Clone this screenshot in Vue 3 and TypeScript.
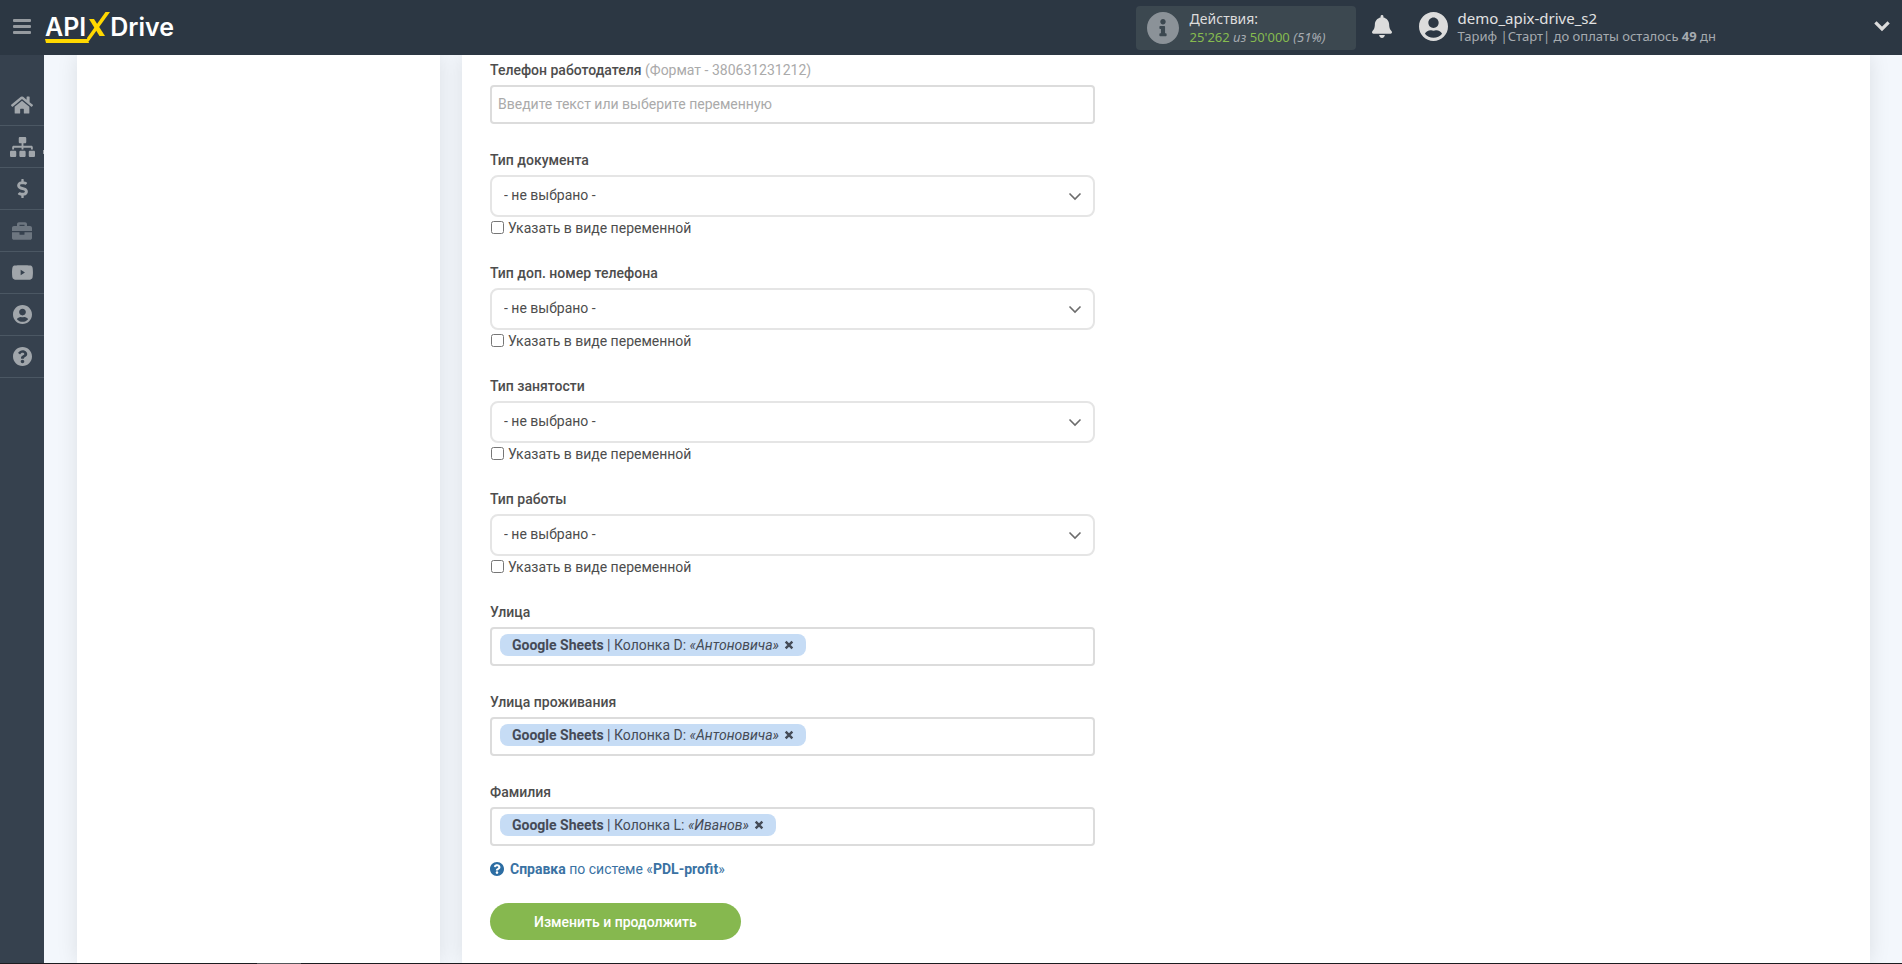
<script setup lang="ts">
import { ref } from 'vue'

interface NavItem {
  name: string
  box: string
  width: number
  height: number
  path: string
  dim?: boolean
  open?: boolean
}

interface Tag {
  column: string
  value: string
}

interface Field {
  id: string
  label: string
  hint?: string
  kind: 'text' | 'select' | 'tags'
  tags?: Tag[]
}

const question =
  'M504 256c0 137-111 248-248 248S8 393 8 256C8 119.100 119 8 256 8s248 111.100 248 248zM262.700 90c-54.500 0-89.300 23-116.500 63.800-3.500 5.300-2.400 12.400 2.700 16.300l34.700 26.300c5.200 3.900 12.600 3 16.700-2.100 17.900-22.700 30.100-35.800 57.300-35.800 20.400 0 45.700 13.100 45.700 33 0 15-12.400 22.700-32.500 34C247.100 238.500 216 254.900 216 296v4c0 6.600 5.400 12 12 12h56c6.600 0 12-5.400 12-12v-1.300c0-28.500 83.200-29.600 83.200-106.700 0-58-60.200-102-116.500-102zM256 338c-25.400 0-46 20.600-46 46s20.600 46 46 46 46-20.600 46-46-20.600-46-46-46z'
const userCircle =
  'M248 8C111 8 0 119 0 256s111 248 248 248 248-111 248-248S385 8 248 8zm0 96c48.600 0 88 39.400 88 88s-39.400 88-88 88-88-39.400-88-88 39.400-88 88-88zm0 344c-58.700 0-111.300-26.600-146.500-68.200 18.800-35.400 55.600-59.800 98.500-59.800 2.400 0 4.800.4 7.100 1.100 13 4.200 26.600 6.900 40.900 6.900 14.300 0 28-2.700 40.900-6.900 2.300-.7 4.700-1.100 7.100-1.100 42.900 0 79.700 24.400 98.500 59.800C359.300 421.400 306.700 448 248 448z'

const nav: NavItem[] = [
  {
    name: 'Главная', box: '0 0 576 512', width: 22, height: 20,
    path: 'M280.400 148.300L96 300.100V464a16 16 0 0 0 16 16l112.100-.3a16 16 0 0 0 15.900-16V368a16 16 0 0 1 16-16h64a16 16 0 0 1 16 16v95.600a16 16 0 0 0 16 16.100l112 .3a16 16 0 0 0 16-16V300L295.700 148.300a12.200 12.200 0 0 0-15.300 0zM571.600 251.500L488 182.600V44.100a12 12 0 0 0-12-12h-56a12 12 0 0 0-12 12v72.600L318.500 43a48 48 0 0 0-61 0L4.300 251.500a12 12 0 0 0-1.600 16.900l25.500 31a12 12 0 0 0 16.900 1.600l235.200-193.700a12.200 12.200 0 0 1 15.300 0L530.900 301a12 12 0 0 0 16.900-1.600l25.500-31a12 12 0 0 0-1.700-16.900z',
  },
  {
    name: 'Связи', box: '0 0 640 512', width: 25, height: 20, open: true,
    path: 'M128 352H32c-17.700 0-32 14.300-32 32v96c0 17.700 14.300 32 32 32h96c17.700 0 32-14.300 32-32v-96c0-17.700-14.300-32-32-32zm-24-80h192v48h48v-48h192v48h48v-57.600c0-21.200-17.200-38.400-38.400-38.400H344v-64h40c17.700 0 32-14.300 32-32V32c0-17.700-14.300-32-32-32H256c-17.700 0-32 14.300-32 32v96c0 17.700 14.300 32 32 32h40v64H94.400C73.200 224 56 241.200 56 262.400V320h48v-48zm264 80h-96c-17.700 0-32 14.300-32 32v96c0 17.700 14.300 32 32 32h96c17.700 0 32-14.300 32-32v-96c0-17.700-14.300-32-32-32zm240 0h-96c-17.700 0-32 14.300-32 32v96c0 17.700 14.300 32 32 32h96c17.700 0 32-14.300 32-32v-96c0-17.700-14.300-32-32-32z',
  },
  {
    name: 'Оплата', box: '0 0 288 512', width: 11, height: 19,
    path: 'M209.200 233.400l-108-31.600C88.700 198.200 80 186.500 80 173.500c0-16.300 13.200-29.500 29.500-29.500h66.300c12.200 0 24.200 3.700 34.200 10.500 6.100 4.100 14.300 3.100 19.500-2l34.800-34c7.100-6.900 6.100-18.400-1.800-24.500C238 74.800 207.400 64.100 176 64V16c0-8.800-7.200-16-16-16h-32c-8.800 0-16 7.200-16 16v48h-2.500C45.800 64-5.400 118.700.5 183.600c4.200 46.100 39.400 83.600 83.800 96.600l102.500 30c12.500 3.700 21.200 15.300 21.200 28.300 0 16.300-13.200 29.500-29.500 29.500h-66.300C100 368 88 364.300 78 357.500c-6.100-4.100-14.300-3.100-19.500 2l-34.800 34c-7.100 6.900-6.100 18.400 1.800 24.500 24.500 19.200 55.100 29.900 86.500 30v48c0 8.800 7.200 16 16 16h32c8.800 0 16-7.200 16-16v-48.200c46.600-.9 90.300-28.600 105.700-72.700 21.500-61.600-14.600-124.800-72.500-141.700z',
  },
  {
    name: 'Проекты', box: '0 0 512 512', width: 20, height: 20, dim: true,
    path: 'M320 336c0 8.800-7.200 16-16 16h-96c-8.800 0-16-7.200-16-16v-48H0v144c0 25.600 22.400 48 48 48h416c25.600 0 48-22.400 48-48V288H320v48zm144-208h-80V80c0-25.600-22.400-48-48-48H176c-25.600 0-48 22.400-48 48v48H48c-25.600 0-48 22.400-48 48v80h512v-80c0-25.600-22.400-48-48-48zm-144 0H192V96h128v32z',
  },
  {
    name: 'Видео', box: '14 64 548 384', width: 21, height: 15,
    path: 'M549.700 124.100c-6.300-23.700-24.800-42.300-48.300-48.600C458.800 64 288 64 288 64S117.200 64 74.600 75.500c-23.500 6.300-42 24.900-48.300 48.600-11.400 42.900-11.400 132.300-11.400 132.300s0 89.400 11.400 132.300c6.300 23.700 24.800 41.500 48.300 47.800C117.200 448 288 448 288 448s170.800 0 213.400-11.500c23.500-6.300 42-24.200 48.300-47.800 11.400-42.900 11.400-132.300 11.400-132.300s0-89.400-11.400-132.300zM240 326V187l112 69z',
  },
  { name: 'Профиль', box: '0 8 496 496', width: 19, height: 19, path: userCircle },
  { name: 'Помощь', box: '8 8 496 496', width: 19, height: 19, path: question },
]

const fields: Field[] = [
  { id: 'employer-phone', label: 'Телефон работодателя', hint: '(Формат - 380631231212)', kind: 'text' },
  { id: 'doc-type', label: 'Тип документа', kind: 'select' },
  { id: 'extra-phone-type', label: 'Тип доп. номер телефона', kind: 'select' },
  { id: 'employment-type', label: 'Тип занятости', kind: 'select' },
  { id: 'work-type', label: 'Тип работы', kind: 'select' },
  { id: 'street', label: 'Улица', kind: 'tags', tags: [{ column: 'Колонка D:', value: '«Антоновича»' }] },
  { id: 'living-street', label: 'Улица проживания', kind: 'tags', tags: [{ column: 'Колонка D:', value: '«Антоновича»' }] },
  { id: 'surname', label: 'Фамилия', kind: 'tags', tags: [{ column: 'Колонка L:', value: '«Иванов»' }] },
]

const tags = ref<Record<string, Tag[]>>(
  Object.fromEntries(fields.map((f) => [f.id, f.tags ?? []])),
)

function removeTag(id: string, index: number) {
  tags.value[id].splice(index, 1)
}
</script>

<template>
  <div class="page">
    <header class="topbar">
      <button class="burger" type="button" aria-label="Меню"><i></i><i></i><i></i></button>
      <a class="logo" href="#" aria-label="APIXDrive">
        <span class="logo-api">API</span>
        <svg class="logo-x" viewBox="0 0 24 32" width="24" height="32" aria-hidden="true">
          <path d="M3 8h5l11 17h-5.500z" fill="#ffd800" />
          <path d="M19.500 1H24L3 30H1.500L1 27z" fill="#ffd800" />
        </svg>
        <span class="logo-drive">Drive</span>
        <svg class="logo-line" viewBox="0 0 44 4" width="44" height="4" aria-hidden="true">
          <path d="M0 0h43l1 4H1z" fill="#ffd800" />
        </svg>
      </a>

      <div class="usage">
        <svg class="usage-icon" viewBox="8 8 496 496" width="32" height="32" aria-hidden="true">
          <path d="M256 8C119 8 8 119.100 8 256c0 137 111 248 248 248s248-111 248-248C504 119.100 393 8 256 8zm0 110c23.200 0 42 18.800 42 42s-18.800 42-42 42-42-18.800-42-42 18.800-42 42-42zm56 254c0 6.600-5.400 12-12 12h-88c-6.600 0-12-5.400-12-12v-24c0-6.600 5.400-12 12-12h12v-64h-12c-6.600 0-12-5.400-12-12v-24c0-6.600 5.400-12 12-12h64c6.600 0 12 5.400 12 12v100h12c6.600 0 12 5.400 12 12z" />
        </svg>
        <div>
          <div class="usage-title">Действия:</div>
          <div class="usage-count"><b>25'262</b> <em>из</em> <b>50'000</b> <em>(51%)</em></div>
        </div>
      </div>

      <button class="bell" type="button" aria-label="Уведомления">
        <svg viewBox="0 0 448 512" width="20" height="23" aria-hidden="true">
          <path d="M224 512c35.300 0 64-28.700 64-64H160c0 35.300 28.600 64 64 64zm215.400-149.700c-19.300-20.800-55.500-52-55.500-154.300 0-77.700-54.500-139.900-127.900-155.200V32c0-17.700-14.300-32-32-32s-32 14.300-32 32v20.800C118.600 68.100 64.100 130.300 64.100 208c0 102.300-36.200 133.500-55.500 154.300-6 6.400-8.700 14.100-8.600 21.700.1 16.400 13 32 32.100 32h383.800c19.100 0 32-15.600 32.100-32 0-7.600-2.700-15.300-8.600-21.700z" />
        </svg>
      </button>

      <div class="account">
        <svg viewBox="0 8 496 496" width="29" height="29" aria-hidden="true"><path :d="userCircle" /></svg>
        <div>
          <div class="account-name">demo_apix-drive_s2</div>
          <div class="account-plan">Тариф |Старт| до оплаты осталось <b>49</b> дн</div>
        </div>
      </div>

      <button class="more" type="button" aria-label="Открыть меню аккаунта">
        <svg viewBox="0 0 16 11" width="16" height="11" aria-hidden="true">
          <path d="M2.500 2.500L8 8l5.500-5.500" fill="none" stroke="#dcdcdc" stroke-width="3.200" stroke-linecap="square" />
        </svg>
      </button>
    </header>

    <div class="body">
      <nav class="rail">
        <a v-for="item in nav" :key="item.name" class="rail-item" :class="{ dim: item.dim, open: item.open }" href="#" :aria-label="item.name">
          <svg :viewBox="item.box" :width="item.width" :height="item.height" aria-hidden="true"><path :d="item.path" /></svg>
        </a>
      </nav>

      <div class="content">
        <aside class="panel"></aside>
        <main class="panel main">
          <form class="form" @submit.prevent>
            <div v-for="field in fields" :key="field.id" class="field">
              <label class="label" :for="field.id">{{ field.label }} <span v-if="field.hint">{{ field.hint }}</span></label>

              <input v-if="field.kind === 'text'" :id="field.id" class="box text" type="text" placeholder="Введите текст или выберите переменную" />

              <template v-else-if="field.kind === 'select'">
                <div class="select-wrap">
                  <select :id="field.id" class="select">
                    <option>- не выбрано -</option>
                  </select>
                  <svg class="chevron" viewBox="0 0 14 9" width="14" height="9" aria-hidden="true">
                    <path d="M1.500 1.500L7 7l5.500-5.500" fill="none" stroke="#6c6c6c" stroke-width="1.600" />
                  </svg>
                </div>
                <label class="check"><input type="checkbox" />Указать в виде переменной</label>
              </template>

              <div v-else class="box tags">
                <span v-for="(tag, i) in tags[field.id]" :key="i" class="tag">
                  <span><b>Google Sheets</b> | {{ tag.column }} <em>{{ tag.value }}</em></span>
                  <button type="button" aria-label="Удалить" @click="removeTag(field.id, i)">
                    <svg viewBox="0 0 9 9" width="10" height="10" aria-hidden="true">
                      <path d="M1.500 1.500l6 6m0-6l-6 6" stroke="#454b57" stroke-width="2.200" fill="none" />
                    </svg>
                  </button>
                </span>
                <input :id="field.id" type="text" />
              </div>
            </div>

            <a class="help" href="#">
              <svg viewBox="8 8 496 496" width="14" height="14" aria-hidden="true"><path :d="question" /></svg>
              <span><b>Справка</b> по системе «<b>PDL-profit</b>»</span>
            </a>
            <button class="submit" type="submit">Изменить и продолжить</button>
          </form>
        </main>
      </div>
    </div>
    <div class="edge"><i></i></div>
  </div>
</template>

<style>
html,
body {
  background: #f3f7fc;
}
</style>

<style scoped>
* {
  box-sizing: border-box;
}
button {
  padding: 0;
  border: 0;
  background: none;
  font: inherit;
  cursor: pointer;
}
svg {
  display: block;
  flex: none;
}
.page {
  display: flex;
  flex-direction: column;
  min-height: 100vh;
  font: 14px/18px Roboto, sans-serif;
  color: #4d4d4d;
}

.topbar {
  position: relative;
  z-index: 1;
  display: flex;
  align-items: center;
  height: 55px;
  padding: 0 12px 2px 13px;
  background: #2c3743;
  font-family: "Noto Sans", sans-serif;
}
.burger {
  display: grid;
  gap: 3px;
  width: 18px;
}
.burger i {
  height: 3px;
  background: #969ba0;
  border-radius: 1px;
}
.logo {
  position: relative;
  display: flex;
  align-items: center;
  height: 32px;
  margin-left: 14px;
  margin-right: auto;
  color: #fff;
  font: 600 25px/32px Inter, sans-serif;
  text-decoration: none;
}
.logo-line {
  position: absolute;
  left: 0;
  bottom: 0;
}
.usage {
  display: flex;
  align-items: center;
  gap: 11px;
  width: 220px;
  height: 44px;
  margin-top: 2px;
  padding-left: 11px;
  background: #3c4850;
  border-radius: 4px;
}
.usage-icon {
  fill: #8b9298;
}
.usage-title {
  font-size: 14px;
  line-height: 18px;
  color: #dcdcdc;
}
.usage-count {
  font-size: 13px;
  line-height: 18px;
  color: #a6abb0;
}
.usage-count b {
  font-weight: 400;
  color: #86bb4f;
}
.bell {
  margin-left: 16px;
}
.bell svg,
.account svg {
  fill: #dcdcdc;
}
.account {
  display: flex;
  align-items: center;
  gap: 10px;
  margin-left: 27px;
}
.account-name {
  font-size: 15px;
  line-height: 18px;
  color: #e2e2e2;
}
.account-plan {
  font-size: 13px;
  line-height: 18px;
  color: #a6abb0;
}
.more {
  margin-left: 158px;
}

.body {
  flex: 1;
  display: flex;
}
.rail {
  width: 44px;
  padding-top: 29px;
  background: #36414e;
}
.rail-item {
  position: relative;
  display: flex;
  align-items: center;
  justify-content: center;
  height: 42px;
  border-bottom: 1px solid #4b5763;
}
.rail-item.open::after {
  content: "";
  position: absolute;
  right: 0;
  bottom: 13px;
  width: 1px;
  height: 4px;
  background: #a1a6ab;
}
.rail-item svg {
  fill: #a1a6ab;
}
.rail-item.dim svg {
  fill: #6d7680;
}
.content {
  flex: 1;
  display: grid;
  grid-template-columns: 363px 1fr;
  gap: 22px;
  padding: 0 32px 0 33px;
}
.panel {
  background: #fff;
  box-shadow: 0 0 20px rgba(0, 0, 0, 0.1);
}
.main {
  padding: 6px 28px 23px;
}
.form {
  max-width: 605px;
}
.field {
  margin-bottom: 27px;
}
.label {
  display: block;
  margin-bottom: 6px;
  font-weight: 500;
}
.label span {
  font-weight: 400;
  color: #aaa;
}
.box {
  width: 100%;
  height: 39px;
  background: #fff;
  border: 2px solid #dcdcdc;
  border-radius: 4px;
}
.text {
  display: block;
  padding: 0 6px 2px;
  font: inherit;
}
.text::placeholder {
  color: #aaa;
}
.select-wrap {
  position: relative;
}
.select {
  display: block;
  width: 100%;
  height: 42px;
  padding: 0 40px 2px 12px;
  appearance: none;
  background: #fff;
  border: 2px solid #e5e5e5;
  border-radius: 8px;
  font: inherit;
  color: inherit;
}
.chevron {
  position: absolute;
  right: 13px;
  top: 17px;
  pointer-events: none;
}
.check {
  display: flex;
  align-items: center;
  gap: 4px;
  height: 20px;
  padding-top: 1px;
}
.check input {
  width: 13px;
  height: 13px;
  margin: 0 0 0 1px;
}
.tags {
  display: flex;
  align-items: flex-start;
  padding: 5px 8px 0;
}
.tags input {
  flex: 1;
  min-width: 0;
  height: 22px;
  padding: 0 4px;
  border: 0;
  outline: 0;
  font: inherit;
}
.tag {
  display: flex;
  align-items: center;
  gap: 5px;
  height: 22px;
  padding: 0 12px;
  background: #c6dcf5;
  border-radius: 8px;
  color: #454b57;
}
.help {
  display: flex;
  align-items: center;
  gap: 6px;
  width: fit-content;
  margin-top: -13px;
  color: #3a72a3;
  text-decoration: none;
}
.help svg {
  fill: #2c6da3;
}
.help b {
  font-weight: 700;
}
.submit {
  display: block;
  height: 37px;
  margin-top: 25px;
  padding: 0 44px;
  background: #86b84f;
  border-radius: 19px;
  color: #fff;
  font-weight: 500;
}
.edge {
  height: 1px;
  padding-left: 257px;
  background: #1c1c20;
}
.edge i {
  display: block;
  width: 44px;
  height: 1px;
  background: #55565a;
}
</style>
